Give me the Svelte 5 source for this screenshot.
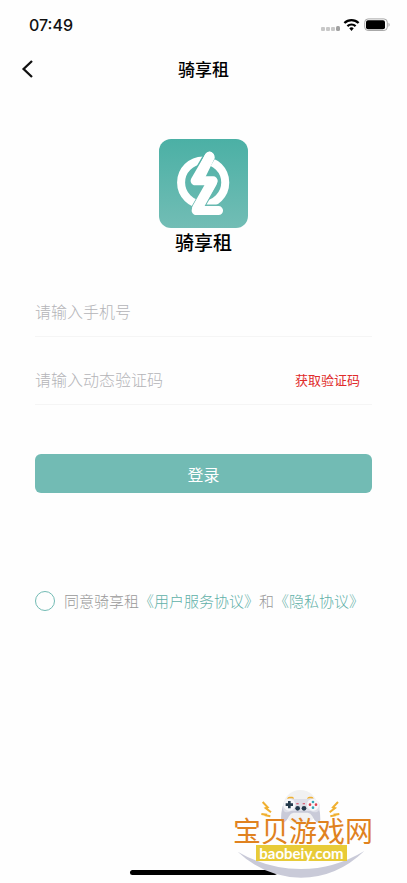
<script>
	let phone = $state('');
	let code = $state('');
	let agreed = $state(false);
</script>

<div class="page">
	<div class="status">
		<span class="time">07:49</span>
		<svg class="signals" width="70" height="16" viewBox="0 0 70 16" aria-hidden="true">
			<g fill="#c8c8c8">
				<rect x="0" y="10" width="4" height="4" rx="1" />
				<rect x="5" y="10" width="4" height="4" rx="1" />
				<rect x="10" y="10" width="4" height="4" rx="1" />
				<rect x="15" y="9" width="4" height="5" rx="1.5" fill="#a2a2a2" />
			</g>
			<g fill="none" stroke="#000" stroke-width="2.3">
				<path d="M23.4 6a10.2 10.2 0 0 1 14.2 0" />
				<path d="M26.4 9.1a6.2 6.2 0 0 1 8.2 0" />
			</g>
			<path d="M28.3 11.3a3.4 3.4 0 0 1 4.4 0L30.5 14z" />
			<rect x="43.7" y="1.9" width="22.6" height="11.6" rx="3.4" fill="none" stroke="#a8a8a8" />
			<rect x="45" y="3.2" width="19" height="9" rx="2" />
			<path d="M67.5 5.7v4c1.6-.6 1.6-3.4 0-4z" fill="#a8a8a8" />
		</svg>
	</div>

	<header>
		<button class="back" type="button" aria-label="返回">
			<svg width="12" height="18" viewBox="0 0 12 18">
				<path d="M11 1 2.6 9 11 17" fill="none" stroke="#111" stroke-width="2.3" />
			</svg>
		</button>
		<h1>骑享租</h1>
	</header>

	<main>
		<div class="brand">
			<svg width="89" height="89" viewBox="0 0 266 266" aria-hidden="true">
				<defs>
					<linearGradient id="teal" gradientUnits="userSpaceOnUse" x1="0" y1="0" x2="0" y2="266">
						<stop offset="0" stop-color="#4bb0a5" />
						<stop offset="1" stop-color="#72bdb5" />
					</linearGradient>
				</defs>
				<rect width="266" height="266" rx="36" fill="url(#teal)" />
				<circle cx="132" cy="130" r="66" fill="none" stroke="#fff" stroke-width="24" />
				<g fill="none" stroke-linecap="round" stroke-linejoin="round">
					<path d="M151 51 108 125H162L111 214H178" stroke="url(#teal)" stroke-width="36" />
					<path d="M151 51 108 125H162L111 214H178" stroke="#fff" stroke-width="27" />
					<path d="M151 54 118 121M158 130 114 208" stroke="#fff" stroke-width="31" />
				</g>
			</svg>
			<p>骑享租</p>
		</div>

		<form onsubmit={(e) => e.preventDefault()}>
			<div class="field">
				<input type="tel" aria-label="手机号" placeholder="请输入手机号" bind:value={phone} />
			</div>
			<div class="field">
				<input type="text" aria-label="动态验证码" placeholder="请输入动态验证码" bind:value={code} />
				<button class="get-code" type="button">获取验证码</button>
			</div>
			<button class="login" type="submit">登录</button>
			<div class="agreement">
				<input id="agree" type="checkbox" bind:checked={agreed} />
				<p>
					<label for="agree">同意骑享租</label><a href="#service">《用户服务协议》</a>和<a href="#privacy">《隐私协议》</a>
				</p>
			</div>
		</form>
	</main>

	<div class="home-bar"></div>

	<div class="watermark">
		<svg width="140" height="88" viewBox="39 30 420 264" aria-hidden="true">
			<circle cx="241" cy="82" r="52" fill="#f1f1f2" />
			<path d="M53 215Q143 267 243 267T433 213Q350 293 243 293T53 215z" fill="#c9cad8" />
			<g fill="none" stroke="#f0b030" stroke-width="6">
				<path d="M128 66 143 82 137 84 153 97M124 102 138 104 137 106 151 109" />
				<path d="M354 66 339 82 345 84 329 97M358 102 344 104 345 106 331 109" />
			</g>
			<path d="M201 56q2-6 8-6h8q4 0 5 6zM261 56q2-6 7-6h7q5 0 6 6z" fill="#f0b030" />
			<path
				d="M188 78q-6 24-5 41 2 11 10 8 8-4 14-18 5-10 14-11h42q9 1 14 11 6 14 14 18 8 3 10-8 1-17-5-41z"
				fill="#c9cad8"
			/>
			<path
				d="M206 56q8-3 15 1h41q8-4 16-1 20 5 21 19 1 17-8 21-10 3-19-3h-59q-10 6-18 3-8-5-6-21 2-14 17-19z"
				fill="#dedfe8"
			/>
			<circle cx="208" cy="74" r="18" fill="#f7f7fa" />
			<circle cx="279" cy="74" r="18" fill="#f7f7fa" />
			<path d="M204 63h8v7h7v8h-7v7h-8v-7h-7v-8h7z" fill="#243a4c" />
			<circle cx="233" cy="85" r="7" fill="#243a4c" />
			<circle cx="252" cy="85" r="7" fill="#243a4c" />
			<path d="M229 70h7v3h-7zM248 70h7v3h-7z" fill="#d9405b" />
			<circle cx="279" cy="66" r="4" fill="#35a5b5" />
			<circle cx="279" cy="83" r="4" fill="#35a5b5" />
			<circle cx="270" cy="74" r="4" fill="#e0404f" />
			<circle cx="288" cy="74" r="4" fill="#e0404f" />
		</svg>
		<strong>宝贝游戏网</strong>
		<span>baobeiy.com</span>
	</div>
</div>

<style>
	:global(body) {
		margin: 0;
		background: #fefefe;
	}
	.page {
		position: relative;
		display: flex;
		flex-direction: column;
		min-height: 100vh;
		color: #111;
		font-family: 'Noto Sans CJK SC', sans-serif;
	}
	button,
	input {
		margin: 0;
		padding: 0;
		border: none;
		background: none;
		font-family: inherit;
	}
	h1,
	p {
		margin: 0;
	}
	.status {
		display: flex;
		align-items: center;
		justify-content: space-between;
		height: 50px;
		padding: 0 16px 0 29px;
	}
	.time {
		font-family: Inter, sans-serif;
		font-size: 16px;
		font-weight: 500;
	}
	header {
		display: grid;
		grid-template-columns: 1fr auto 1fr;
		align-items: center;
		height: 38px;
		padding: 0 21px;
	}
	.back {
		display: flex;
		justify-self: start;
	}
	h1 {
		font-size: 17px;
		font-weight: 500;
		line-height: 24px;
		color: #000;
	}
	.brand {
		display: flex;
		flex-direction: column;
		align-items: center;
		margin-top: 51px;
	}
	.brand svg {
		display: block;
	}
	.brand p {
		font-size: 19px;
		font-weight: 500;
		line-height: 28px;
		color: #000;
	}
	form {
		margin-top: 13px;
		padding: 0 35px;
	}
	.field {
		display: flex;
		align-items: flex-end;
		height: 67px;
		border-bottom: 1px solid #f5f5f5;
	}
	.field input {
		flex: 1;
		min-width: 0;
		height: 50px;
		font-size: 16px;
		font-weight: 300;
		outline: none;
	}
	.field input::placeholder {
		color: #b4b4b8;
		opacity: 1;
	}
	.get-code {
		height: 50px;
		padding: 0 12px;
		font-size: 13px;
		color: #e02b2b;
	}
	.login {
		display: block;
		width: 100%;
		height: 39px;
		margin-top: 49px;
		border-radius: 6px;
		background: #72bbb4;
		color: #fff;
		font-size: 16px;
	}
	.agreement {
		display: flex;
		align-items: center;
		gap: 9px;
		margin-top: 98px;
		font-size: 15px;
		font-weight: 300;
		line-height: 20px;
		color: #999;
		white-space: nowrap;
	}
	.agreement input {
		flex: none;
		width: 20px;
		height: 20px;
		appearance: none;
		border: 1px solid #72bbb4;
		border-radius: 50%;
	}
	.agreement input:checked {
		background: #72bbb4;
	}
	.agreement a {
		color: #5fb0a8;
		text-decoration: none;
	}
	.home-bar {
		width: 36%;
		height: 5px;
		margin: auto auto 8px;
		border-radius: 3px;
		background: #000;
	}
	.watermark {
		position: absolute;
		right: 34px;
		bottom: 5px;
		display: flex;
		flex-direction: column;
		align-items: center;
		width: 140px;
		height: 88px;
	}
	.watermark svg {
		position: absolute;
		inset: 0;
	}
	.watermark strong {
		position: relative;
		margin-top: 26px;
		font-size: 28px;
		font-weight: 400;
		line-height: 28px;
		color: #e0821f;
	}
	.watermark span {
		position: relative;
		margin-top: 1px;
		margin-right: 3px;
		padding: 0 3px;
		background: #e8cb38;
		color: #fff;
		font-family: Lato, sans-serif;
		font-size: 15px;
		font-weight: 700;
		line-height: 16px;
	}
</style>
